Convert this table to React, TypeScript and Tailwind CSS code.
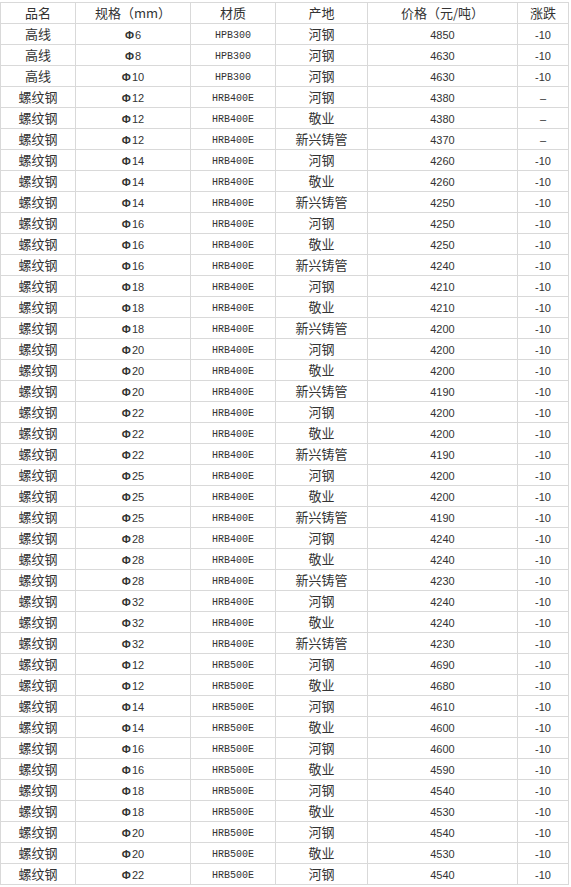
import React from "react"

type Row = [string, string, string, string, string, string]

const rows: Row[] = [
  ["高线", "6", "HPB300", "河钢", "4850", "-10"],
  ["高线", "8", "HPB300", "河钢", "4630", "-10"],
  ["高线", "10", "HPB300", "河钢", "4630", "-10"],
  ["螺纹钢", "12", "HRB400E", "河钢", "4380", "–"],
  ["螺纹钢", "12", "HRB400E", "敬业", "4380", "–"],
  ["螺纹钢", "12", "HRB400E", "新兴铸管", "4370", "–"],
  ["螺纹钢", "14", "HRB400E", "河钢", "4260", "-10"],
  ["螺纹钢", "14", "HRB400E", "敬业", "4260", "-10"],
  ["螺纹钢", "14", "HRB400E", "新兴铸管", "4250", "-10"],
  ["螺纹钢", "16", "HRB400E", "河钢", "4250", "-10"],
  ["螺纹钢", "16", "HRB400E", "敬业", "4250", "-10"],
  ["螺纹钢", "16", "HRB400E", "新兴铸管", "4240", "-10"],
  ["螺纹钢", "18", "HRB400E", "河钢", "4210", "-10"],
  ["螺纹钢", "18", "HRB400E", "敬业", "4210", "-10"],
  ["螺纹钢", "18", "HRB400E", "新兴铸管", "4200", "-10"],
  ["螺纹钢", "20", "HRB400E", "河钢", "4200", "-10"],
  ["螺纹钢", "20", "HRB400E", "敬业", "4200", "-10"],
  ["螺纹钢", "20", "HRB400E", "新兴铸管", "4190", "-10"],
  ["螺纹钢", "22", "HRB400E", "河钢", "4200", "-10"],
  ["螺纹钢", "22", "HRB400E", "敬业", "4200", "-10"],
  ["螺纹钢", "22", "HRB400E", "新兴铸管", "4190", "-10"],
  ["螺纹钢", "25", "HRB400E", "河钢", "4200", "-10"],
  ["螺纹钢", "25", "HRB400E", "敬业", "4200", "-10"],
  ["螺纹钢", "25", "HRB400E", "新兴铸管", "4190", "-10"],
  ["螺纹钢", "28", "HRB400E", "河钢", "4240", "-10"],
  ["螺纹钢", "28", "HRB400E", "敬业", "4240", "-10"],
  ["螺纹钢", "28", "HRB400E", "新兴铸管", "4230", "-10"],
  ["螺纹钢", "32", "HRB400E", "河钢", "4240", "-10"],
  ["螺纹钢", "32", "HRB400E", "敬业", "4240", "-10"],
  ["螺纹钢", "32", "HRB400E", "新兴铸管", "4230", "-10"],
  ["螺纹钢", "12", "HRB500E", "河钢", "4690", "-10"],
  ["螺纹钢", "12", "HRB500E", "敬业", "4680", "-10"],
  ["螺纹钢", "14", "HRB500E", "河钢", "4610", "-10"],
  ["螺纹钢", "14", "HRB500E", "敬业", "4600", "-10"],
  ["螺纹钢", "16", "HRB500E", "河钢", "4600", "-10"],
  ["螺纹钢", "16", "HRB500E", "敬业", "4590", "-10"],
  ["螺纹钢", "18", "HRB500E", "河钢", "4540", "-10"],
  ["螺纹钢", "18", "HRB500E", "敬业", "4530", "-10"],
  ["螺纹钢", "20", "HRB500E", "河钢", "4540", "-10"],
  ["螺纹钢", "20", "HRB500E", "敬业", "4530", "-10"],
  ["螺纹钢", "22", "HRB500E", "河钢", "4540", "-10"],
]

const headers = ["品名", "规格（mm）", "材质", "产地", "价格（元/吨）", "涨跌"]

// shared cell look: thin grey grid, centred text, fixed row height
const cell = "border border-[#d9d9d9] h-[21px] p-0 text-center align-middle leading-[20px] text-[#333]"
const cjk = "font-['Noto_Sans_CJK_SC','Liberation_Sans',sans-serif] text-[13px]"
const num = "font-['Liberation_Sans','Noto_Sans_CJK_SC',sans-serif] text-[11px]"
const mono = "font-['Liberation_Mono',monospace] text-[10px]"

export default function App() {
  return (
    <div className="bg-white w-[571px] h-[887px] overflow-hidden pt-[2px]">
      <table className="border-collapse table-fixed w-[568px]">
        <colgroup>
          <col className="w-[75px]" />
          <col className="w-[115px]" />
          <col className="w-[85px]" />
          <col className="w-[92px]" />
          <col className="w-[150px]" />
          <col className="w-[51px]" />
        </colgroup>
        <thead>
          <tr>
            {headers.map((h) => (
              <th key={h} className={`${cell} ${cjk} font-normal`}>
                {h}
              </th>
            ))}
          </tr>
        </thead>
        <tbody>
          {rows.map((r, i) => (
            <tr key={i}>
              <td className={`${cell} ${cjk}`}>{r[0]}</td>
              <td className={`${cell} ${num}`}>
                <span className="inline-block translate-y-[1px]">
                  <span className="font-semibold mr-[1px]">Φ</span>
                  {r[1]}
                </span>
              </td>
              <td className={`${cell} ${mono}`}>
                <span className="inline-block translate-y-[2px]">{r[2]}</span>
              </td>
              <td className={`${cell} ${cjk}`}>{r[3]}</td>
              <td className={`${cell} ${num}`}>
                <span className="inline-block translate-y-[1px]">{r[4]}</span>
              </td>
              <td className={`${cell} ${num}`}>
                <span className="inline-block translate-y-[1px]">{r[5]}</span>
              </td>
            </tr>
          ))}
        </tbody>
      </table>
    </div>
  )
}
